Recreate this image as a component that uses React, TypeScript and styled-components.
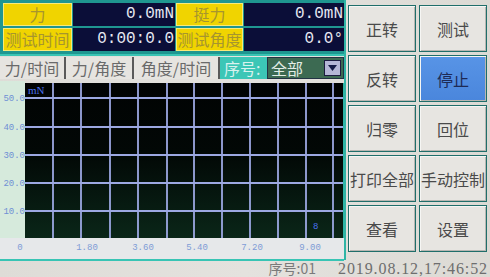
import React from 'react';
import styled, { createGlobalStyle } from 'styled-components';

const GlobalStyle = createGlobalStyle`
  html, body {
    margin: 0;
    padding: 0;
    background: #dddbd6;
    overflow: hidden;
  }
`;

const CJK = `"Noto Sans CJK SC", "Noto Sans", sans-serif`;
const MONO = `"Liberation Mono", "DejaVu Sans Mono", monospace`;

const Screen = styled.div`
  width: 490px;
  height: 277px;
  display: grid;
  grid-template-columns: 346px 144px;
  grid-template-rows: 260px 17px;
  background: linear-gradient(90deg, #dedcd7, #e4e2de 50%, #dcdad4);
  font-family: ${CJK};
  overflow: hidden;
`;

const LeftSide = styled.div`
  display: flex;
  flex-direction: column;
  border-right: 2px solid #2fb5a6;
`;

const InfoPanel = styled.div`
  background: #1f9690;
  padding: 3px 0 3px 3px;
  display: grid;
  grid-template-columns: 69px 102px 67px 100px;
  grid-template-rows: 23px 23px;
  row-gap: 2px;
  column-gap: 1px;
  border-bottom: 2px solid #38c4b4;
`;

const Label = styled.div`
  background: #f0d400;
  border: 1px solid #f8ea7a;
  color: #a6952e;
  font-size: 16px;
  line-height: 21px;
  text-align: center;
  white-space: nowrap;
  overflow: hidden;
`;

const Value = styled.div`
  background: #0b0e38;
  color: #e6e8f2;
  font-family: ${MONO};
  font-size: 16px;
  line-height: 23px;
  text-align: right;
  padding-right: 1px;
  white-space: nowrap;
  overflow: hidden;
`;

const TabRow = styled.div`
  display: flex;
  height: 22px;
  margin-top: 1px;
  background: #e6e4e0;
`;

const Tab = styled.div<{ $w: number }>`
  width: ${p => p.$w}px;
  box-sizing: border-box;
  border-right: 2px solid #5a5a5a;
  color: #6a6a6a;
  font-size: 16px;
  line-height: 22px;
  text-align: center;
  white-space: nowrap;
  overflow: hidden;
`;

const SeqLabel = styled.div`
  width: 47px;
  background: #3cc6b6;
  color: #d8f2ee;
  font-size: 16px;
  line-height: 22px;
  padding-left: 4px;
  box-sizing: border-box;
  white-space: nowrap;
`;

const Select = styled.div`
  flex: 1;
  background: #3c6a52;
  color: #e2ece6;
  font-size: 16px;
  line-height: 22px;
  padding-left: 3px;
  display: flex;
  align-items: center;
  justify-content: space-between;
  border: 1px solid #223344;
`;

const SelectArrow = styled.div`
  width: 15px;
  height: 14px;
  margin-right: 2px;
  background: #b4b6d6;
  border: 1px solid #1c1c40;
  display: flex;
  align-items: center;
  justify-content: center;
`;

const ChartPanel = styled.div`
  flex: 1;
  margin-top: 2px;
  border-bottom: 2px solid #38c4b4;
`;

const RightSide = styled.div`
  display: grid;
  grid-template-columns: 68px 68px;
  grid-template-rows: repeat(5, 47px);
  gap: 3px;
  padding: 5px 2px 0 2px;
`;

const Key = styled.div<{ $active?: boolean }>`
  background: ${p => (p.$active ? 'linear-gradient(180deg, #5894e6, #4a86dc)' : '#e7e5e1')};
  border: 1px solid #1f6e6a;
  box-shadow: inset 1px 1px 0 #f6f6f4, inset -1px -1px 0 #b8b6b2;
  color: ${p => (p.$active ? '#1d2a55' : '#4a4a4a')};
  font-size: 16px;
  display: flex;
  align-items: center;
  justify-content: center;
  white-space: nowrap;
`;

const StatusBar = styled.div`
  grid-column: 1 / span 2;
  display: flex;
  justify-content: flex-end;
  align-items: center;
  color: #7a7a7a;
  font-size: 14px;
  line-height: 17px;
  padding-right: 2px;
  white-space: nowrap;
`;

const StatusSeq = styled.span`
  margin-right: 22px;
`;

const StatusTime = styled.span`
  font-family: "Liberation Serif", serif;
  font-size: 16px;
  letter-spacing: 0.9px;
  color: #6e6e6e;
`;

const vLines = [28, 56, 85, 113, 142, 169, 197, 225, 253, 281, 308];
const hLines = [15, 44, 72, 100, 128];
const yLabels = ['50.0', '40.0', '30.0', '20.0', '10.0'];
const xLabels = [
  { t: '0', x: 20 },
  { t: '1.80', x: 87 },
  { t: '3.60', x: 143 },
  { t: '5.40', x: 197 },
  { t: '7.20', x: 252 },
  { t: '9.00', x: 310 },
];

function Chart() {
  const left = 25;
  const top = 2;
  const w = 319;
  const h = 155;
  return (
    <svg width={344} height={178} viewBox="0 0 344 178" style={{ display: 'block' }}>
      <defs>
        <linearGradient id="plotbg" x1="0" y1="0" x2="0" y2="1">
          <stop offset="0" stopColor="#010303" />
          <stop offset="0.45" stopColor="#020806" />
          <stop offset="1" stopColor="#0a2618" />
        </linearGradient>
      </defs>
      <rect x={0} y={0} width={left} height={top + h} fill="#d6eadc" />
      <rect x={0} y={top + h} width={344} height={178 - top - h} fill="#e6e8ea" />
      <rect x={left} y={top} width={w} height={h} fill="url(#plotbg)" />
      {vLines.map(x => (
        <line key={'v' + x} x1={left + x} y1={top} x2={left + x} y2={top + h} stroke="#9ca8e2" strokeWidth={1.8} />
      ))}
      {hLines.map(y => (
        <line key={'h' + y} x1={left} y1={top + y} x2={left + w} y2={top + y} stroke="#9ca8e2" strokeWidth={1.8} />
      ))}
      <line x1={left + w - 0.5} y1={top} x2={left + w - 0.5} y2={top + h} stroke="#2fb5a6" strokeWidth={1} />
      {yLabels.map((t, i) => (
        <text key={t} x={25} y={top + hLines[i] + 3} textAnchor="end" fontFamily="Liberation Mono, monospace" fontSize={9} fill="#6f8fd4">
          {t}
        </text>
      ))}
      {xLabels.map(l => (
        <text key={l.t} x={l.x} y={top + h + 12} textAnchor="middle" fontFamily="Liberation Mono, monospace" fontSize={9} fill="#7e9cd6">
          {l.t}
        </text>
      ))}
      <text x={left + 3} y={top + 11} fontFamily="Liberation Serif, serif" fontSize={11} fill="#4a72f0">
        mN
      </text>
      <text x={left + 288} y={top + 146} fontFamily="Liberation Mono, monospace" fontSize={9} fill="#4a72f0">
        8
      </text>
    </svg>
  );
}

export default function App() {
  const keys = [
    { t: '正转' },
    { t: '测试' },
    { t: '反转' },
    { t: '停止', active: true },
    { t: '归零' },
    { t: '回位' },
    { t: '打印全部' },
    { t: '手动控制' },
    { t: '查看' },
    { t: '设置' },
  ];
  return (
    <>
      <GlobalStyle />
      <Screen>
        <LeftSide>
          <InfoPanel>
            <Label>力</Label>
            <Value>0.0mN</Value>
            <Label>挺力</Label>
            <Value>0.0mN</Value>
            <Label>测试时间</Label>
            <Value>0:00:0.0</Value>
            <Label>测试角度</Label>
            <Value>0.0°</Value>
          </InfoPanel>
          <TabRow>
            <Tab $w={66}>力/时间</Tab>
            <Tab $w={68}>力/角度</Tab>
            <Tab $w={86}>角度/时间</Tab>
            <SeqLabel>序号:</SeqLabel>
            <Select>
              全部
              <SelectArrow>
                <svg width="9" height="6" viewBox="0 0 9 6">
                  <path d="M0 0 H9 L4.5 6 Z" fill="#141a46" />
                </svg>
              </SelectArrow>
            </Select>
          </TabRow>
          <ChartPanel>
            <Chart />
          </ChartPanel>
        </LeftSide>
        <RightSide>
          {keys.map(k => (
            <Key key={k.t} $active={k.active}>
              {k.t}
            </Key>
          ))}
        </RightSide>
        <StatusBar>
          <StatusSeq>序号:01</StatusSeq>
          <StatusTime>2019.08.12,17:46:52</StatusTime>
        </StatusBar>
      </Screen>
    </>
  );
}
